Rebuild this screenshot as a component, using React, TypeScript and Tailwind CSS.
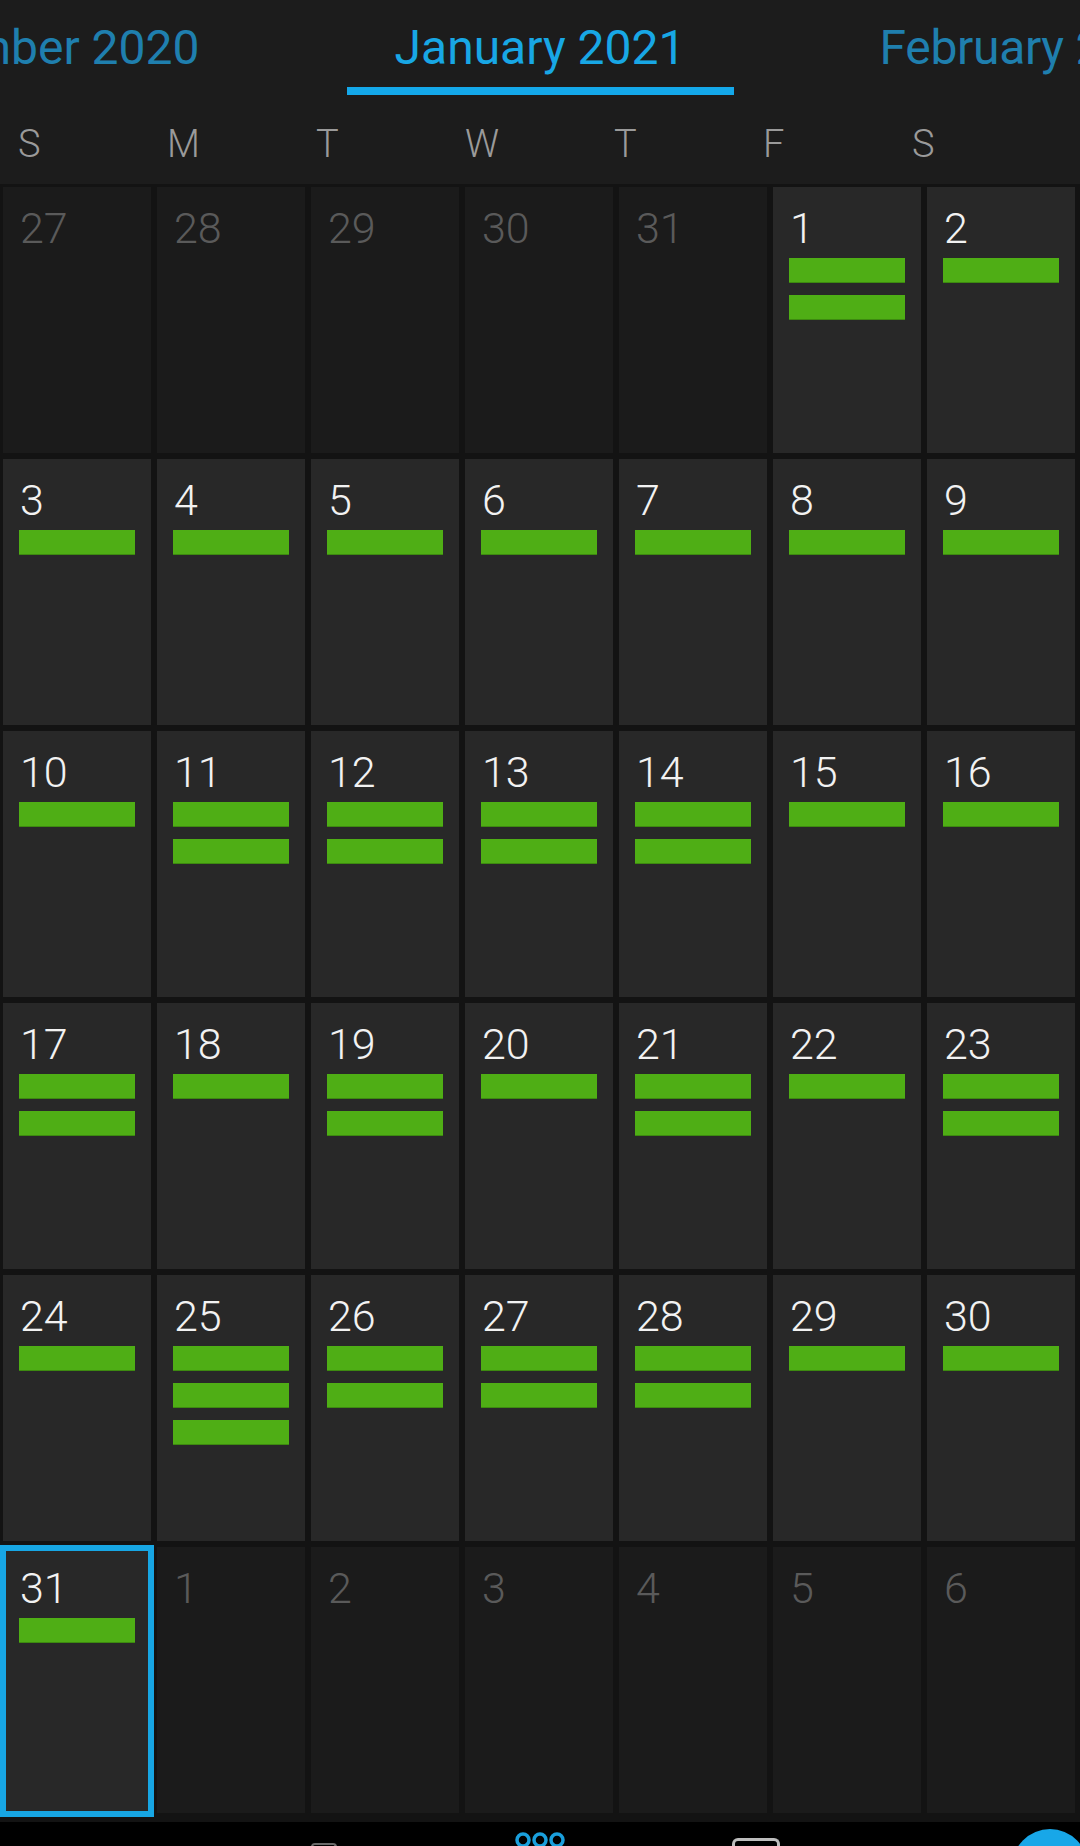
import React from 'react';

type Day = { n: number; inMonth: boolean; events: number; today?: boolean };

const weekdays = ['S', 'M', 'T', 'W', 'T', 'F', 'S'];

// events per day in January 2021
const eventCounts: Record<number, number> = {
  1: 2, 2: 1,
  3: 1, 4: 1, 5: 1, 6: 1, 7: 1, 8: 1, 9: 1,
  10: 1, 11: 2, 12: 2, 13: 2, 14: 2, 15: 1, 16: 1,
  17: 2, 18: 1, 19: 2, 20: 1, 21: 2, 22: 1, 23: 2,
  24: 1, 25: 3, 26: 2, 27: 2, 28: 2, 29: 1, 30: 1,
  31: 1,
};

function buildDays(): Day[] {
  const days: Day[] = [];
  for (let d = 27; d <= 31; d++) days.push({ n: d, inMonth: false, events: 0 });
  for (let d = 1; d <= 31; d++) days.push({ n: d, inMonth: true, events: eventCounts[d] ?? 0, today: d === 31 });
  for (let d = 1; d <= 6; d++) days.push({ n: d, inMonth: false, events: 0 });
  return days;
}

function DayCell({ day }: { day: Day }) {
  return (
    <div
      className={`relative h-[266px] pt-[20px] px-[16px] ${day.inMonth ? 'bg-[#282828]' : 'bg-[#1b1b1b]'}`}
    >
      {day.today && (
        <div className="absolute -left-[3px] -right-[3px] -top-[2px] -bottom-[4px] border-[6px] border-[#17a6e4]" />
      )}
      <div
        className={`text-[43px] leading-none font-light pl-[1px] ${day.inMonth ? 'text-[#f2f2f2]' : 'text-[#5a5a5a]'}`}
      >
        {day.n}
      </div>
      {day.events > 0 && (
        <div className="mt-[8px] flex flex-col gap-[12px]">
          {Array.from({ length: day.events }).map((_, i) => (
            <div key={i} className="h-[25px] bg-[#4fae15] border-b border-[#3d8a10]" />
          ))}
        </div>
      )}
    </div>
  );
}

export default function App() {
  const days = buildDays();

  return (
    <div className="w-[1080px] h-[1846px] bg-[#1c1c1c] flex flex-col overflow-hidden [font-family:Roboto,'Noto_Sans',sans-serif]">
      {/* Month tabs */}
      <div className="h-[95px] pt-[24px] grid grid-cols-[1fr_387px_1fr] overflow-hidden">
        <div className="flex justify-end pr-[147px] overflow-hidden">
          <span className="text-[48px] leading-[48px] text-[#1f7fae] whitespace-nowrap">December 2020</span>
        </div>
        <div className="flex flex-col items-center">
          <span className="text-[48px] leading-[48px] text-[#18a7e5] whitespace-nowrap">January 2021</span>
          <div className="mt-[15px] h-[8px] w-full bg-[#14a8ea]" />
        </div>
        <div className="flex justify-start pl-[146px] overflow-hidden">
          <span className="text-[48px] leading-[48px] tracking-[-0.3px] text-[#1f7fae] whitespace-nowrap">February 2021</span>
        </div>
      </div>

      {/* Weekday labels */}
      <div className="mt-[30px] h-[38px] flex">
        {weekdays.map((w, i) => (
          <div key={i} className="w-[149px] pl-[18px] text-[38px] leading-none font-light text-[#9a9a9a]">
            {w}
          </div>
        ))}
      </div>

      {/* Month grid */}
      <div className="mt-[21px] bg-[#131313] pt-[3px] pl-[3px] pr-[5px] pb-[9px] grid grid-cols-7 gap-[6px]">
        {days.map((d, i) => (
          <DayCell key={i} day={d} />
        ))}
      </div>

      {/* Bottom navigation (mostly cut off) */}
      <div className="relative flex-1 bg-black overflow-hidden">
        <div className="flex h-full">
          <div className="w-[216px]" />
          <div className="w-[216px] flex justify-center pt-[21px]">
            <div className="w-[26px] h-[20px] rounded-t-[4px] border-t-2 border-x-2 border-[#6a6a6a]" />
          </div>
          <div className="w-[216px] flex justify-center pt-[9px]">
            <svg width="50" height="30" viewBox="0 0 50 30">
              <circle cx="8" cy="9" r="6" fill="none" stroke="#1a9fdc" strokeWidth="3.5" />
              <circle cx="25" cy="9" r="6" fill="none" stroke="#1a9fdc" strokeWidth="3.5" />
              <circle cx="42" cy="9" r="6" fill="none" stroke="#1a9fdc" strokeWidth="3.5" />
            </svg>
          </div>
          <div className="w-[216px] flex justify-center pt-[16px]">
            <div className="w-[48px] h-[20px] rounded-t-[6px] border-t-[3px] border-x-[3px] border-[#bdbdbd]" />
          </div>
          <div className="w-[216px]" />
        </div>
        <div className="absolute left-[1012px] top-[7px] w-[76px] h-[76px] rounded-full bg-[#18a7e8]" />
      </div>
    </div>
  );
}
